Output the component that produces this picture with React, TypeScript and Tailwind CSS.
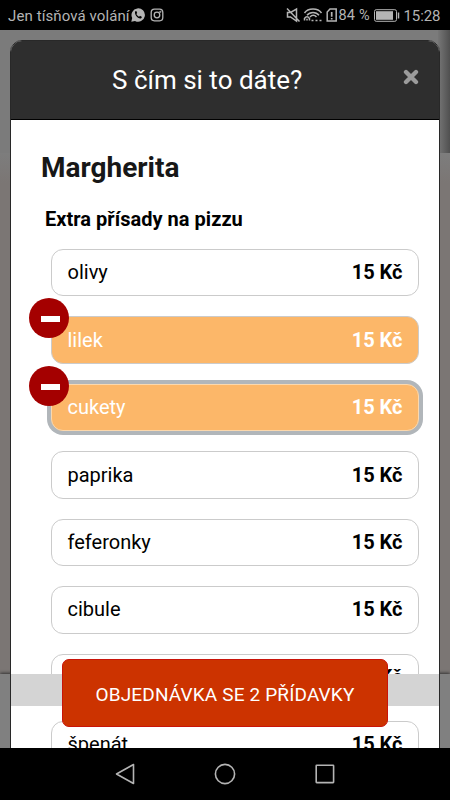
import React from "react";

const items = [
  { name: "olivy" },
  { name: "lilek", picked: true },
  { name: "cukety", picked: true, focused: true },
  { name: "paprika" },
  { name: "feferonky" },
  { name: "cibule" },
  { name: "" },
  { name: "špenát" },
];

function StatusBar() {
  return (
    <header className="flex h-[30px] shrink-0 items-center bg-black pl-2 pr-[10px] text-[#b4b4b4]">
      <span className="w-[122px] whitespace-nowrap pt-px text-[15px] leading-[30px] tracking-[0.1px]">Jen tísňová volání</span>
      <svg className="ml-[1px] h-[14px] w-[14px] shrink-0" viewBox="0 0 14 14">
        <path d="M.3 13.7 1.2 10A6.7 6.7 0 1 1 4 12.9Z" fill="currentColor" />
        <path d="M4.3 3.2C2.8 5.5 6.4 11 10 10.4L11 8.9 9 7.8 8.1 8.7C6.9 8.2 5.8 7.1 5.4 6L6.2 5 5.3 3Z" fill="#000" />
      </svg>
      <svg className="ml-[5px] h-[14px] w-[14px] shrink-0" viewBox="0 0 14 14" fill="none" stroke="currentColor" strokeWidth="1.3">
        <rect x="1.2" y="1.2" width="11.6" height="11.6" rx="3.2" />
        <circle cx="7" cy="7" r="2.8" />
        <circle cx="10.4" cy="3.7" r=".4" />
      </svg>
      <div className="ml-auto flex items-center">
        <svg className="h-[16px] w-[53px]" viewBox="0 0 53 16" fill="none" stroke="currentColor" strokeWidth="1.5">
          <path d="M1.5 5.5h3L10.5 2v12L4.5 10h-3ZM1 1.5 13.5 14.5" />
          <path d="M18.5 6C22 .8 32 .8 35.5 6M21 8.2C24 4.5 30 4.5 33 8.2M24 10C26 7.8 28.5 7.8 30.5 10" />
          <path d="M18.5 13.5V11.5Q21 8 23.5 11.5V13.5M21 11.8v1.8M25.5 13.4h2M29.5 13.4h2M33.5 13.4h2" />
          <path d="M44 2h6.2v12h-9V5Z" />
          <path d="M45.7 5v4.8M45.7 11v1.6" strokeWidth="1.7" />
        </svg>
        <span className="w-[31px] whitespace-nowrap pt-[2px] text-[14.5px] leading-[30px] tracking-[0.2px]">84 %</span>
        <svg className="ml-[4px] h-[13px] w-[26px]" viewBox="0 0 26 13">
          <rect x=".5" y=".7" width="22" height="11.6" rx="1.7" fill="none" stroke="currentColor" />
          <rect x="2" y="2.2" width="17" height="8.6" fill="currentColor" />
          <path d="M24.5 3.5v6" stroke="currentColor" strokeWidth="1.5" />
        </svg>
        <span className="ml-[4px] w-[36.5px] whitespace-nowrap pt-[2px] text-[15px] leading-[30px] tracking-[-0.1px]">15:28</span>
      </div>
    </header>
  );
}

function Row({ name, picked, focused }: { name: string; picked?: boolean; focused?: boolean }) {
  return (
    <li
      className={`relative flex h-[47.4px] shrink-0 items-center justify-between rounded-[12px] border pb-px pl-[15.5px] pr-[15.5px] text-[20px] ${
        picked ? "bg-[#fcb769] text-white" : "bg-white text-black"
      } ${focused ? "border-[#fbd8ad] shadow-[0_0_0_4px_#b1b6ba]" : "border-[#cbcbcb]"}`}
    >
      <span>{name}</span>
      <span className="font-bold">15 Kč</span>
      {picked && (
        <span className="absolute -left-[22.7px] -top-[19.3px] flex h-10 w-10 items-center justify-center rounded-full bg-[#a40000]">
          <span className="ml-[2px] mt-[2px] h-[6px] w-[19px] bg-white" />
        </span>
      )}
    </li>
  );
}

export default function App() {
  return (
    <div className="flex h-[800px] w-[450px] flex-col overflow-hidden bg-black font-['Roboto',sans-serif]">
      <StatusBar />
      <main className="relative h-[718px] shrink-0 overflow-hidden">
        <div className="flex h-full flex-col">
          <div className="flex h-[123px] shrink-0 justify-end bg-[#7b7b7b]">
            <div className="w-3 bg-linear-to-r from-[#777] to-[#505050]" />
          </div>
          <div className="h-[30px] shrink-0 bg-linear-to-b from-[#7d7d7d] to-[#7b7674]" />
          <div className="h-[491px] shrink-0 bg-[#7b7674]" />
          <div className="h-[74px] bg-[#808080] shadow-[0_-1px_3px_#333]" />
        </div>
        <section className="absolute inset-x-[10px] top-[10px] flex h-[720px] flex-col rounded-t-[12px] border border-[#282828] bg-white">
          <div className="flex h-[79px] shrink-0 items-center rounded-t-[11px] border-b border-black bg-[#2e2e2e] text-white">
            <h1 className="ml-[101px] w-[190px] whitespace-nowrap text-[26px] leading-none">S čím si to dáte?</h1>
            <svg className="mb-[7px] ml-[101px] h-[16px] w-[16px]" viewBox="0 0 16 16">
              <path d="m3 3 10 10M13 3 3 13" stroke="#9b9b9b" strokeWidth="4.3" strokeLinecap="round" />
            </svg>
          </div>
          <h2 className="ml-[30px] mt-[32px] text-[28px] font-bold leading-8 text-[#171717]">Margherita</h2>
          <h3 className="ml-[34px] mt-[23px] text-[20px] font-bold leading-6 tracking-[0.03px] text-black">Extra přísady na pizzu</h3>
          <ul className="ml-[40px] mt-[18px] flex w-[368px] flex-col gap-[20.05px]">
            {items.map((item, i) => (
              <Row key={i} {...item} />
            ))}
          </ul>
        </section>
        <div className="absolute inset-x-[11px] top-[644px] h-8 bg-[#d4d4d4]" />
        <button className="absolute left-[62px] top-[629px] flex h-[68px] w-[326px] items-center justify-center whitespace-nowrap rounded-[7px] border border-[#c91409] bg-[#cc3300] pt-[4px] text-[19px] tracking-[0.15px] text-white">
          OBJEDNÁVKA SE 2 PŘÍDAVKY
        </button>
      </main>
      <nav className="flex h-[52px] shrink-0 items-center justify-center gap-[76px] bg-black text-[#b4b4b4]">
        <svg className="h-6 w-6" viewBox="0 0 24 24" fill="none" stroke="currentColor" strokeWidth="1.6" strokeLinejoin="round">
          <path d="M20.5 2.5v19L3.5 12Z" />
        </svg>
        <svg className="h-6 w-6" viewBox="0 0 24 24" fill="none" stroke="currentColor" strokeWidth="1.6">
          <circle cx="12" cy="12" r="9.6" />
        </svg>
        <svg className="h-6 w-6" viewBox="0 0 24 24" fill="none" stroke="currentColor" strokeWidth="1.6">
          <rect x="3.2" y="3.2" width="17.4" height="17.4" rx=".5" />
        </svg>
      </nav>
    </div>
  );
}
